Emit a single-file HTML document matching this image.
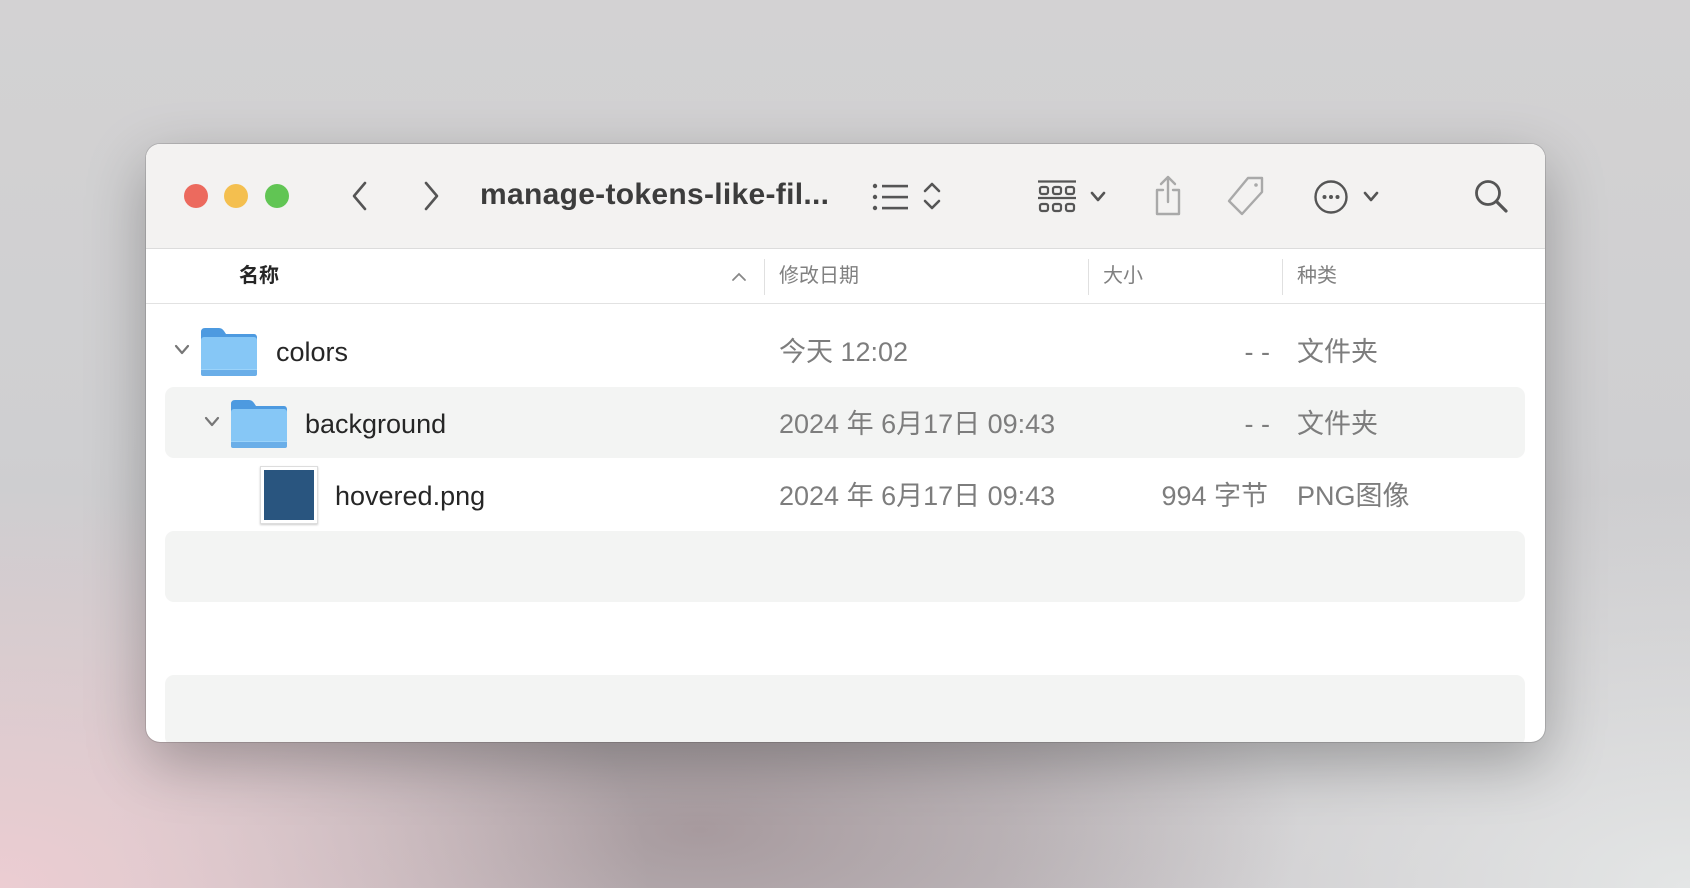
<!DOCTYPE html>
<html><head><meta charset="utf-8"><style>
*{margin:0;padding:0;box-sizing:border-box}
body{width:1690px;height:888px;overflow:hidden;position:relative;font-family:"Liberation Sans","Noto Sans CJK SC",sans-serif;
background:radial-gradient(ellipse 650px 400px at 0px 888px,#eccdd2 0%,rgba(236,205,210,0) 100%),
radial-gradient(ellipse 600px 250px at 700px 830px,#a79a9e 0%,rgba(167,154,158,0) 100%),
radial-gradient(ellipse 700px 400px at 1690px 888px,#e4e6e6 0%,rgba(228,230,230,0) 100%),
linear-gradient(180deg,#d3d2d3 0%,#cfcfd1 50%,#c9c6c9 100%);}
.a{position:absolute}
.win{left:146px;top:144px;width:1399px;height:598px;border-radius:14px;background:#fff;overflow:hidden;box-shadow:0 20px 60px rgba(0,0,0,.28),0 0 0 1px rgba(0,0,0,.12)}
.tb{left:0;top:0;width:100%;height:105px;background:#f3f2f1;border-bottom:1px solid #dcdcdc}
.dot{width:24px;height:24px;border-radius:50%;top:40px}
.hdr{top:106px;left:0;width:100%;height:54px;border-bottom:1px solid #e2e2e2}
.ht{font-size:20px;color:#808080;top:11px;line-height:30px}
.sep{width:1px;height:36px;top:9px;background:#e0e0e0}
.row{left:19px;width:1360px;height:71px;border-radius:9px;background:#f3f4f3}
.t{font-size:27px;color:#262626;line-height:34px}
.g{font-size:27px;color:#7d7d7d;line-height:34px;white-space:nowrap}
.r{text-align:right;width:200px}
</style></head><body>
<div class="a win">
 <div class="a tb">
  <div class="a dot" style="left:38px;background:#ec6a5e"></div>
  <div class="a dot" style="left:78px;background:#f4bf4f"></div>
  <div class="a dot" style="left:119px;background:#61c554"></div>
  <svg class="a" style="left:202px;top:36px" width="24" height="32" viewBox="0 0 24 32"><path d="M17 3 L6 16 L17 29" fill="none" stroke="#555" stroke-width="2.6" stroke-linecap="round" stroke-linejoin="round"/></svg>
  <svg class="a" style="left:273px;top:36px" width="24" height="32" viewBox="0 0 24 32"><path d="M7 3 L18 16 L7 29" fill="none" stroke="#555" stroke-width="2.6" stroke-linecap="round" stroke-linejoin="round"/></svg>
  <div class="a" style="left:334px;top:34px;font-size:30px;font-weight:bold;color:#3c3c3c;letter-spacing:0.3px;white-space:nowrap">manage-tokens-like-fil...</div>
  <svg class="a" style="left:726px;top:38px" width="40" height="30" viewBox="0 0 40 30"><g fill="#555"><circle cx="3" cy="4" r="2.2"/><circle cx="3" cy="15" r="2.2"/><circle cx="3" cy="26" r="2.2"/><rect x="10" y="2.8" width="26" height="2.6"/><rect x="10" y="13.8" width="26" height="2.6"/><rect x="10" y="24.8" width="26" height="2.6"/></g></svg>
  <svg class="a" style="left:776px;top:36px" width="20" height="32" viewBox="0 0 20 32"><path d="M3 11 L10 4 L17 11 M3 21 L10 28 L17 21" fill="none" stroke="#555" stroke-width="2.6" stroke-linecap="round" stroke-linejoin="round"/></svg>
  <svg class="a" style="left:892px;top:36px" width="38" height="34" viewBox="0 0 38 34"><g fill="none" stroke="#555" stroke-width="2.2"><line x1="0" y1="1.5" x2="38" y2="1.5"/><line x1="0" y1="18" x2="38" y2="18"/><rect x="2" y="7" width="8" height="7" rx="2"/><rect x="15" y="7" width="8" height="7" rx="2"/><rect x="28" y="7" width="8" height="7" rx="2"/><rect x="2" y="24" width="8" height="7" rx="2"/><rect x="15" y="24" width="8" height="7" rx="2"/><rect x="28" y="24" width="8" height="7" rx="2"/></g></svg>
  <svg class="a" style="left:943px;top:46px" width="18" height="14" viewBox="0 0 18 14"><path d="M3 3 L9 10 L15 3" fill="none" stroke="#555" stroke-width="2.6" stroke-linecap="round" stroke-linejoin="round"/></svg>
  <svg class="a" style="left:1005px;top:30px" width="34" height="44" viewBox="0 0 34 44"><g fill="none" stroke="#a9a9a9" stroke-width="2.4" stroke-linecap="round" stroke-linejoin="round"><path d="M12 16 H6 V40 H28 V16 H22"/><path d="M17 28 V3 M10 10 L17 3 L24 10"/></g></svg>
  <svg class="a" style="left:1080px;top:30px" width="42" height="44" viewBox="0 0 42 44"><g fill="none" stroke="#a9a9a9" stroke-width="2.4" stroke-linejoin="round"><path d="M22 4 H36 V18 L16 40 L3 27 Z"/><circle cx="30" cy="11" r="1.8" fill="#a9a9a9" stroke="none"/></g></svg>
  <svg class="a" style="left:1167px;top:35px" width="36" height="36" viewBox="0 0 36 36"><circle cx="18" cy="18" r="15.5" fill="none" stroke="#555" stroke-width="2.4"/><g fill="#555"><circle cx="11.5" cy="18" r="2"/><circle cx="18" cy="18" r="2"/><circle cx="24.5" cy="18" r="2"/></g></svg>
  <svg class="a" style="left:1216px;top:46px" width="18" height="14" viewBox="0 0 18 14"><path d="M3 3 L9 10 L15 3" fill="none" stroke="#555" stroke-width="2.6" stroke-linecap="round" stroke-linejoin="round"/></svg>
  <svg class="a" style="left:1327px;top:34px" width="38" height="38" viewBox="0 0 38 38"><circle cx="15" cy="15" r="11.5" fill="none" stroke="#555" stroke-width="2.8"/><path d="M23.5 23.5 L33 33" stroke="#555" stroke-width="3.2" stroke-linecap="round"/></svg>
 </div>
 <div class="a hdr">
  <div class="a ht" style="left:93px;color:#262626;font-weight:bold">名称</div>
  <svg class="a" style="left:585px;top:21px" width="16" height="12" viewBox="0 0 16 12"><path d="M2 9 L8 3 L14 9" fill="none" stroke="#888" stroke-width="1.8" stroke-linecap="round"/></svg>
  <div class="a sep" style="left:618px"></div>
  <div class="a ht" style="left:633px">修改日期</div>
  <div class="a sep" style="left:942px"></div>
  <div class="a ht" style="left:957px">大小</div>
  <div class="a sep" style="left:1136px"></div>
  <div class="a ht" style="left:1151px">种类</div>
 </div>
 <div class="a row" style="top:243px"></div>
 <div class="a row" style="top:387px"></div>
 <div class="a row" style="top:531px"></div>

 <svg class="a" style="left:27px;top:199px" width="18" height="14" viewBox="0 0 18 14"><path d="M3 3 L9 10 L15 3" fill="none" stroke="#777" stroke-width="2.2" stroke-linecap="round" stroke-linejoin="round"/></svg>
 <svg class="a" style="left:53px;top:182px" width="60" height="52" viewBox="0 0 60 52"><path d="M2 6 Q2 2 6 2 H20 Q23 2 25 5 L27 8 H55 Q58 8 58 12 V20 H2 Z" fill="#4d9ae0"/><rect x="2" y="11" width="56" height="39" rx="3" fill="#86c7f6"/><rect x="2" y="43" width="56" height="7" rx="2" fill="#6aaee8"/><line x1="2" y1="43.5" x2="58" y2="43.5" stroke="#9bd3fa" stroke-width="1"/></svg>
 <div class="a t" style="left:130px;top:191px">colors</div>
 <div class="a g" style="left:633px;top:191px">今天 12:02</div>
 <div class="a g r" style="left:924px;top:191px">- -</div>
 <div class="a g" style="left:1151px;top:191px">文件夹</div>

 <svg class="a" style="left:57px;top:271px" width="18" height="14" viewBox="0 0 18 14"><path d="M3 3 L9 10 L15 3" fill="none" stroke="#777" stroke-width="2.2" stroke-linecap="round" stroke-linejoin="round"/></svg>
 <svg class="a" style="left:83px;top:254px" width="60" height="52" viewBox="0 0 60 52"><path d="M2 6 Q2 2 6 2 H20 Q23 2 25 5 L27 8 H55 Q58 8 58 12 V20 H2 Z" fill="#4d9ae0"/><rect x="2" y="11" width="56" height="39" rx="3" fill="#86c7f6"/><rect x="2" y="43" width="56" height="7" rx="2" fill="#6aaee8"/><line x1="2" y1="43.5" x2="58" y2="43.5" stroke="#9bd3fa" stroke-width="1"/></svg>
 <div class="a t" style="left:159px;top:263px">background</div>
 <div class="a g" style="left:633px;top:263px">2024 年 6月17日 09:43</div>
 <div class="a g r" style="left:924px;top:263px">- -</div>
 <div class="a g" style="left:1151px;top:263px">文件夹</div>

 <div class="a" style="left:114px;top:322px;width:58px;height:58px;background:#fff;border:1px solid #ddd;box-shadow:0 1px 2px rgba(0,0,0,.2)"><div class="a" style="left:3px;top:3px;width:50px;height:50px;background:#29557f"></div></div>
 <div class="a t" style="left:189px;top:335px">hovered.png</div>
 <div class="a g" style="left:633px;top:335px">2024 年 6月17日 09:43</div>
 <div class="a g r" style="left:922px;top:335px">994 字节</div>
 <div class="a g" style="left:1151px;top:335px">PNG图像</div>
</div>
</body></html>
